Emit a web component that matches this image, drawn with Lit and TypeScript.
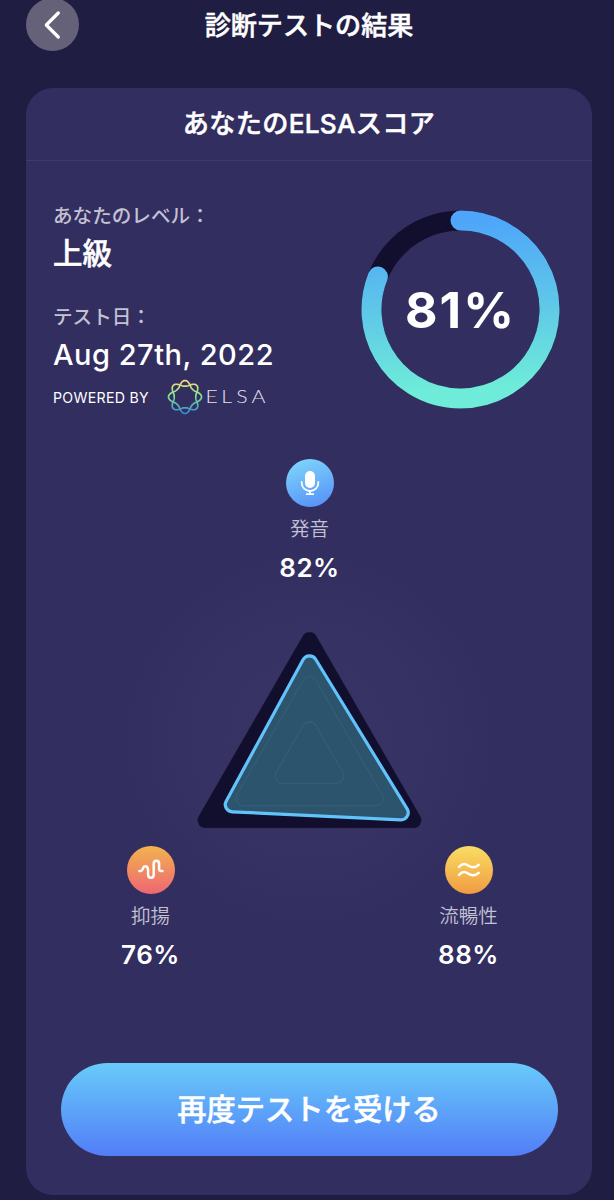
import { LitElement, html, svg, css } from "lit";
import { customElement, property } from "lit/decorators.js";

type Point = [number, number];

/** Outline of a polygon (clockwise on screen) whose corners are arcs of radius r around the points. */
function roundedOutline(points: Point[], r: number): string {
  const n = points.length;
  let d = "";
  let first = "";
  for (let i = 0; i < n; i++) {
    const [ax, ay] = points[i];
    const [bx, by] = points[(i + 1) % n];
    const len = Math.hypot(bx - ax, by - ay);
    const nx = ((by - ay) / len) * r;
    const ny = (-(bx - ax) / len) * r;
    const start = `${(ax + nx).toFixed(2)} ${(ay + ny).toFixed(2)}`;
    if (i === 0) first = start;
    d += i === 0 ? `M${start}` : `A${r} ${r} 0 0 1 ${start}`;
    d += `L${(bx + nx).toFixed(2)} ${(by + ny).toFixed(2)}`;
  }
  return `${d}A${r} ${r} 0 0 1 ${first}Z`;
}

/** Closed four-petal curve around the origin, turned by the given angle. */
function petals(turn: number): string {
  const pts: string[] = [];
  for (let i = 0; i < 144; i++) {
    const t = (i / 144) * Math.PI * 2;
    const r = 10.8 + 5.7 * Math.pow((1 + Math.cos(4 * t)) / 2, 1.4);
    pts.push(`${(r * Math.cos(t + turn)).toFixed(2)} ${(r * Math.sin(t + turn)).toFixed(2)}`);
  }
  return `M${pts.join("L")}Z`;
}

@customElement("skill-metric")
export class SkillMetric extends LitElement {
  @property() kind = "mic";
  @property() label = "";
  @property({ type: Number }) value = 0;

  static styles = css`
    :host {
      display: flex;
      flex-direction: column;
      align-items: center;
      width: 120px;
    }
    .badge {
      width: 48px;
      height: 48px;
      border-radius: 50%;
    }
    .mic { background: linear-gradient(160deg, #7fd6fa 5%, #5794f9 90%); }
    .pitch { background: linear-gradient(180deg, #f3b34f, #ee6673); }
    .flow { background: linear-gradient(180deg, #f9de62, #f09b42); }
    .badge svg { display: block; }
    .label {
      margin-top: 7px;
      font-size: 19.5px;
      line-height: 30px;
      font-weight: 350;
      color: #c3c1d3;
    }
    .value {
      margin-top: 7px;
      font-size: 26px;
      line-height: 33px;
      font-weight: 600;
      letter-spacing: 0.5px;
      color: #fff;
    }
  `;

  private glyph() {
    if (this.kind === "mic") {
      return svg`<rect x="19" y="12" width="10" height="17" rx="5" fill="#fff" stroke="none"/>
        <path d="M15.7 22.8v1.200a8.300 8 0 0 0 16.600 0v-1.200M24 32v3.200M20.700 35.200h6.600" stroke-width="1.800"/>`;
    }
    if (this.kind === "pitch") {
      return svg`<path stroke-width="2.500" d="M12.400 25h1.800c1.900 0 1.200-4.800 4-4.800 2.700 0 2.900 2 2.900 4.300v4.300c0 3.900 5.600 3.900 5.600 0V17.600c0-3.900 5.400-3.900 5.400 0v5.200c0 1.600.7 2.200 2 2.200h1.300"/>`;
    }
    return svg`<path stroke-width="2.500" d="M14 20.900c5-5 7.500-2.200 10.200-.7 3.400 1.700 6.200 1.600 9.500-1.400M14 28.900c5-5 7.500-2.200 10.200-.7 3.400 1.700 6.200 1.600 9.500-1.400"/>`;
  }

  render() {
    return html`
      <div class="badge ${this.kind}">
        <svg width="48" height="48" viewBox="0 0 48 48" fill="none" stroke="#fff" stroke-linecap="round" stroke-linejoin="round">
          ${this.glyph()}
        </svg>
      </div>
      <div class="label">${this.label}</div>
      <div class="value">${this.value}%</div>
    `;
  }
}

@customElement("score-ring")
export class ScoreRing extends LitElement {
  @property({ type: Number }) value = 0;

  static styles = css`
    :host {
      display: grid;
      width: 200px;
      height: 200px;
    }
    svg, .value { grid-area: 1 / 1; }
    .value {
      place-self: center;
      font-size: 50px;
      line-height: 60px;
      font-weight: 700;
      letter-spacing: 2px;
      color: #fff;
    }
  `;

  render() {
    const around = 2 * Math.PI * 89;
    return html`
      <svg width="200" height="200" viewBox="0.500 0.500 200 200" fill="none">
        <defs>
          <linearGradient id="arc" gradientUnits="userSpaceOnUse" x1="90" y1="0" x2="100" y2="200">
            <stop offset="0.05" stop-color="#4ea5fa" />
            <stop offset="0.5" stop-color="#5fc8e8" />
            <stop offset="0.9" stop-color="#6eecd9" />
          </linearGradient>
        </defs>
        <circle cx="100" cy="100" r="89" stroke="#110f2d" stroke-width="20" />
        <path d="M100 11A89 89 0 1 1 99.990 11" stroke="url(#arc)" stroke-width="20" stroke-linecap="round"
          stroke-dasharray="${(around * this.value) / 100} ${around}" />
      </svg>
      <div class="value">${this.value}%</div>
    `;
  }
}

@customElement("app-root")
export class AppRoot extends LitElement {
  static styles = css`
    :host {
      display: block;
      box-sizing: border-box;
      height: 1200px;
      overflow: hidden;
      padding: 0 22px 0 26px;
      background: #201d43;
      color: #fff;
      font-family: Inter, "Noto Sans CJK JP", sans-serif;
    }
    .top {
      display: grid;
      grid-template-columns: 53px 1fr 53px;
      align-items: center;
      height: 53px;
      margin-top: -2px;
      margin-bottom: 37px;
    }
    .back {
      width: 53px;
      height: 53px;
      border-radius: 50%;
      background: #656179;
    }
    .back svg { display: block; }
    .title, .heading, .level, .retry {
      font-weight: 500;
      -webkit-text-stroke: 0.5px #fff;
    }
    .title {
      padding-top: 3px;
      text-align: center;
      font-size: 26.100px;
      line-height: 40px;
    }
    .card {
      box-sizing: border-box;
      height: 1107px;
      border-radius: 27px;
      background: #322e60;
      overflow: hidden;
    }
    .heading {
      height: 72px;
      border-bottom: 1px solid #3e3a6b;
      text-align: center;
      font-size: 26.200px;
      line-height: 71px;
      letter-spacing: 0.300px;
    }
    .summary {
      display: flex;
      justify-content: space-between;
      padding: 39px 31.500px 0 27px;
    }
    .caption {
      padding-top: 2px;
      font-size: 19.600px;
      line-height: 28px;
      font-weight: 500;
      color: #c3c1d3;
    }
    .level {
      padding-top: 1px;
      font-size: 29.500px;
      line-height: 44px;
      margin-bottom: 26px;
    }
    .date {
      padding-top: 1px;
      font-size: 29px;
      line-height: 45px;
      font-weight: 500;
      letter-spacing: 0.500px;
    }
    .powered {
      display: flex;
      align-items: center;
      height: 40px;
      font-size: 14.200px;
      letter-spacing: 0.280px;
    }
    .brand {
      margin-left: 18px;
    }
    .powered svg { display: block; }
    .wordmark {
      font-family: Lato, sans-serif;
      font-weight: 300;
    }
    score-ring { margin-top: 9.500px; }
    .skills {
      display: flex;
      flex-direction: column;
      align-items: center;
      height: 646px;
      box-sizing: border-box;
      padding: 42px 0 0 1px;
      background: radial-gradient(circle at 283px 323px, #383465 0, #363263 110px, #322e60 190px);
    }
    .radar { display: block; margin-top: 25px; }
    .pair {
      display: flex;
      justify-content: space-between;
      width: 438px;
    }
    .retry {
      display: block;
      box-sizing: border-box;
      width: 497px;
      height: 93px;
      margin: 0 auto;
      padding: 0 0 6px;
      border: 0;
      border-radius: 47px;
      background: linear-gradient(180deg, #68cbfa, #527df7);
      color: #fff;
      font-family: inherit;
      font-size: 29.300px;
    }
  `;

  private radar() {
    const outer = roundedOutline([[309.5, 640], [413.7, 820.5], [205.3, 820.5]], 8);
    const score = roundedOutline([[309.5, 663.2], [401, 812.8], [232.5, 804.8]], 7.2);
    const mid = roundedOutline([[309.5, 684.5], [375.5, 798.5], [243.5, 798.5]], 7.5);
    const inner = roundedOutline([[309.5, 729.7], [336.2, 776], [282.8, 776]], 7.5);
    return html`
      <svg class="radar" width="240" height="237" viewBox="190 609.200 240 237" fill="none">
        <path d=${outer} fill="#110f2d" stroke="#3a3665" stroke-width="0.600" />
        <path d=${score} fill="#2c546c" stroke="#61c3fb" stroke-width="3.200" />
        <path d=${mid} stroke="#365d76" stroke-width="1.300" />
        <path d=${inner} stroke="#365d76" stroke-width="1.300" />
      </svg>
    `;
  }

  private brand() {
    return html`
      <svg class="brand" width="102" height="38" viewBox="0 0 102 38" fill="none">
        <defs>
          <linearGradient id="petal" gradientUnits="userSpaceOnUse" x1="0" y1="-16" x2="0" y2="16">
            <stop offset="0" stop-color="#f5d87b" />
            <stop offset="0.45" stop-color="#80e58e" />
            <stop offset="1" stop-color="#378ad3" />
          </linearGradient>
        </defs>
        <g transform="translate(18 19)" stroke="url(#petal)" stroke-width="1.700">
          <path d=${petals(0)} />
          <path d=${petals(Math.PI / 4)} />
        </g>
        <text class="wordmark" transform="translate(38.500 25) scale(1.250 1)" font-size="17" fill="#e4e2ee"
          x="0 12.700 24.700 36.900">ELSA</text>
      </svg>
    `;
  }

  render() {
    return html`
      <header class="top">
        <div class="back">
          <svg width="53" height="53" viewBox="0 0 53 53" fill="none" stroke="#fff" stroke-width="3.200"
            stroke-linecap="round" stroke-linejoin="round">
            <path d="M32.300 15L20.300 27L32.300 39" />
          </svg>
        </div>
        <div class="title">診断テストの結果</div>
      </header>
      <main class="card">
        <div class="heading">あなたのELSAスコア</div>
        <section class="summary">
          <div>
            <div class="caption">あなたのレベル：</div>
            <div class="level">上級</div>
            <div class="caption">テスト日：</div>
            <div class="date">Aug 27th, 2022</div>
            <div class="powered">POWERED BY ${this.brand()}</div>
          </div>
          <score-ring .value=${81}></score-ring>
        </section>
        <section class="skills">
          <skill-metric kind="mic" label="発音" .value=${82}></skill-metric>
          ${this.radar()}
          <div class="pair">
            <skill-metric kind="pitch" label="抑揚" .value=${76}></skill-metric>
            <skill-metric kind="flow" label="流暢性" .value=${88}></skill-metric>
          </div>
        </section>
        <button class="retry">再度テストを受ける</button>
      </main>
    `;
  }
}
